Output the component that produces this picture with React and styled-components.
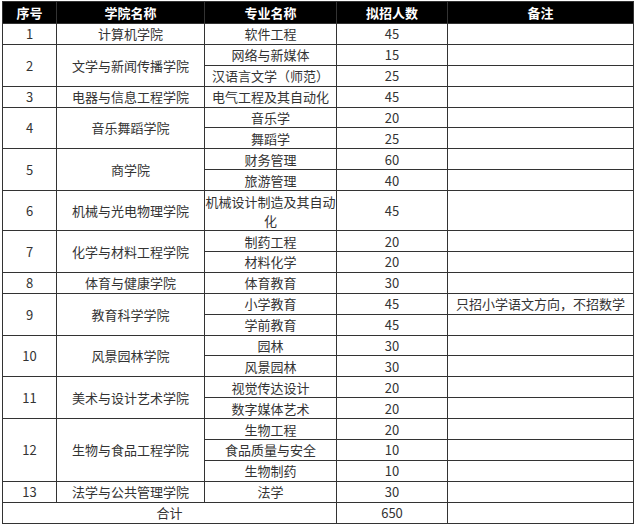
import React from 'react';
import styled, { createGlobalStyle } from 'styled-components';

const GlobalStyle = createGlobalStyle`
	body {
		margin: 0;
		background: #fff;
		font-family: "Noto Sans CJK SC", "Noto Sans", sans-serif;
	}
`;

const rows = [
	{ no: '1', college: '计算机学院', majors: [['软件工程', '45']] },
	{ no: '2', college: '文学与新闻传播学院', majors: [['网络与新媒体', '15'], ['汉语言文学（师范）', '25']] },
	{ no: '3', college: '电器与信息工程学院', majors: [['电气工程及其自动化', '45']] },
	{ no: '4', college: '音乐舞蹈学院', majors: [['音乐学', '20'], ['舞蹈学', '25']] },
	{ no: '5', college: '商学院', majors: [['财务管理', '60'], ['旅游管理', '40']] },
	{ no: '6', college: '机械与光电物理学院', majors: [['机械设计制造及其自动化', '45']], tall: true },
	{ no: '7', college: '化学与材料工程学院', majors: [['制药工程', '20'], ['材料化学', '20']] },
	{ no: '8', college: '体育与健康学院', majors: [['体育教育', '30']] },
	{ no: '9', college: '教育科学学院', majors: [['小学教育', '45', '只招小学语文方向，不招数学'], ['学前教育', '45']] },
	{ no: '10', college: '风景园林学院', majors: [['园林', '30'], ['风景园林', '30']] },
	{ no: '11', college: '美术与设计艺术学院', majors: [['视觉传达设计', '20'], ['数字媒体艺术', '20']] },
	{ no: '12', college: '生物与食品工程学院', majors: [['生物工程', '20'], ['食品质量与安全', '10'], ['生物制药', '10']] },
	{ no: '13', college: '法学与公共管理学院', majors: [['法学', '30']] }
];

function App() {
	return (
		<>
			<GlobalStyle />
			<Table>
				<colgroup>
					<col style={{ width: 54 }} />
					<col style={{ width: 148 }} />
					<col style={{ width: 132 }} />
					<col style={{ width: 111 }} />
					<col style={{ width: 186 }} />
				</colgroup>
				<thead>
					<tr>
						<Th>序号</Th>
						<Th>学院名称</Th>
						<Th>专业名称</Th>
						<Th>拟招人数</Th>
						<Th>备注</Th>
					</tr>
				</thead>
				<tbody>
					{rows.map((r) =>
						r.majors.map((m, i) => (
							<Row key={r.no + '-' + i} $tall={r.tall}>
								{i === 0 && <Td rowSpan={r.majors.length}>{r.no}</Td>}
								{i === 0 && <Td rowSpan={r.majors.length}>{r.college}</Td>}
								<Td $tall={r.tall}>{m[0]}</Td>
								<Td>{m[1]}</Td>
								<Td>{m[2] || ''}</Td>
							</Row>
						))
					)}
					<Row>
						<Td colSpan={3}>合计</Td>
						<Td>650</Td>
						<Td></Td>
					</Row>
				</tbody>
			</Table>
		</>
	);
}

export default App;

const Table = styled.table`
	margin: 1px 0 0 2px;
	width: 631px;
	table-layout: fixed;
	border-collapse: collapse;
	font-size: 13px;
	color: #333;
`;

const Th = styled.th`
	height: 21px;
	padding: 0;
	background: #000;
	color: #fff;
	font-weight: bold;
	font-size: 13px;
	line-height: 18px;
	border: 1px solid #333;
	text-align: center;
`;

const Row = styled.tr`
	height: ${(p) => (p.$tall ? '40px' : '20.9px')};
`;

const Td = styled.td`
	padding: 0;
	line-height: ${(p) => (p.$tall ? '19px' : '17px')};
	text-align: center;
	border: 1px solid #333;
	white-space: normal;
`;
